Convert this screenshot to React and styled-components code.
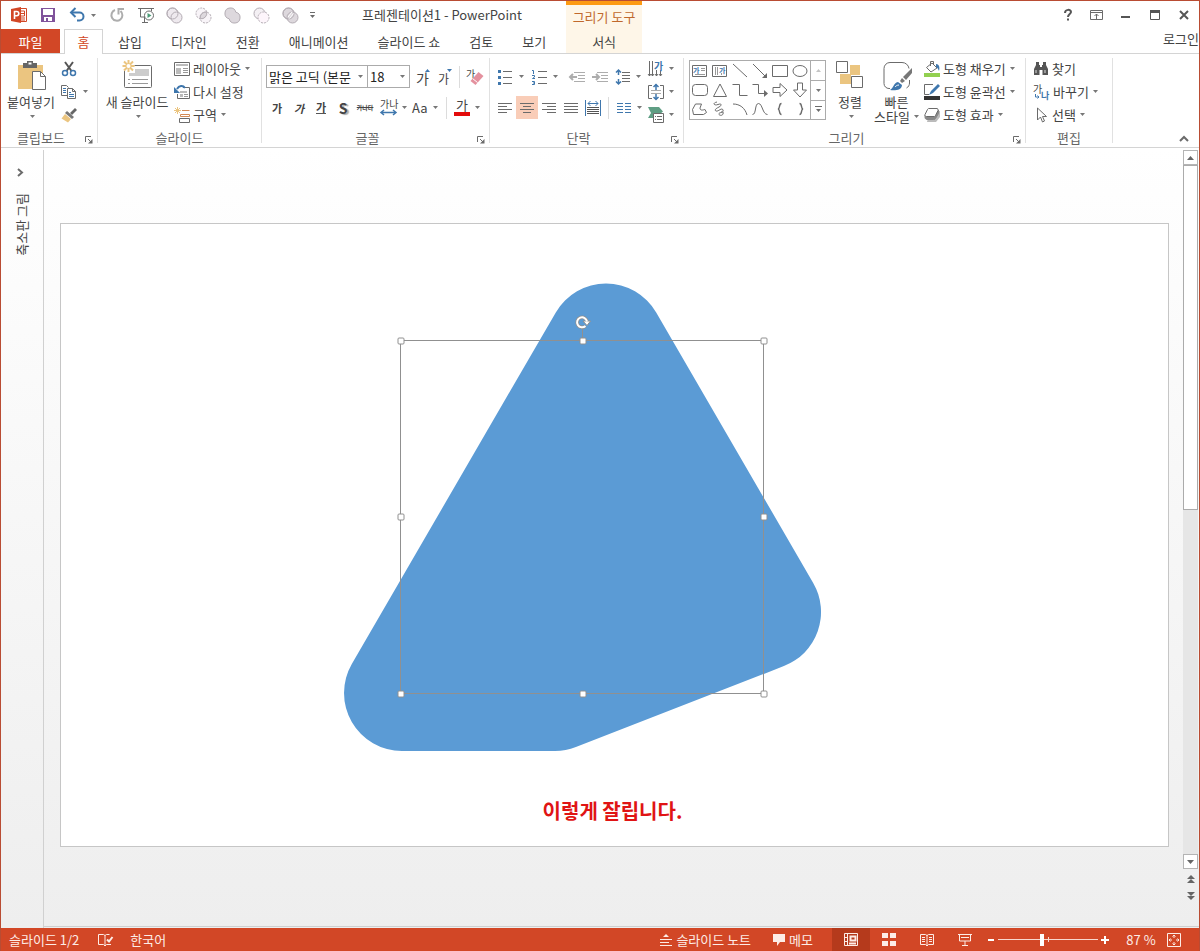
import React from "react";
import styled, { createGlobalStyle, css } from "styled-components";

const G = "#6b6b6b";
const B = "#3f77ad";
const Y = "#ebc580";

const GlobalStyle = createGlobalStyle`
  * { box-sizing: border-box; }
  body { margin: 0; }
  body, button, select, input {
    font-family: "Noto Sans CJK KR", "Liberation Sans", sans-serif;
    font-size: 13px;
    line-height: 18px;
    color: #444;
  }
  button {
    border: 0;
    padding: 0;
    margin: 0;
    background: transparent;
    white-space: nowrap;
  }
  svg { display: block; flex: none; overflow: visible; }
`;

const Window = styled.div`
  min-height: 100vh;
  display: flex;
  flex-direction: column;
  border: 1px solid #b94c33;
  border-bottom: 0;
  background: #fff;
  overflow: hidden;
`;

/* ---------- title bar ---------- */

const TitleBar = styled.header`
  display: flex;
  height: 28px;
`;

const QuickAccess = styled.div`
  display: flex;
  align-items: center;
  padding-left: 3px;
`;

const QuickButton = styled.button`
  width: 29px;
  height: 28px;
  display: flex;
  align-items: center;
  justify-content: center;
`;

const CaretButton = styled.button`
  width: ${(p) => p.$w || 11}px;
  height: 22px;
  display: flex;
  align-items: center;
  justify-content: flex-start;
`;

const DocTitle = styled.h1`
  margin: 0;
  width: 244px;
  padding: 4px 4px 0 0;
  font-size: 13px;
  line-height: 20px;
  font-weight: 400;
  text-align: center;
  white-space: nowrap;
`;

const ContextHeader = styled.div`
  width: 76px;
  border-top: 4px solid #fd9a12;
  background: #fef6e8;
  color: #c0682c;
  line-height: 24px;
  text-align: center;
  white-space: nowrap;
`;

const WindowControls = styled.div`
  display: flex;
  margin-left: auto;
  padding-right: 1px;
`;

/* ---------- tabs ---------- */

const TabBar = styled.nav`
  display: flex;
  height: 25px;
  box-shadow: inset 0 -1px #d4d4d4;
`;

const Tab = styled.button`
  height: 25px;
  padding: 0 14px;
  margin-right: 1px;
  line-height: 24px;
  ${(p) => p.$kind === "file" && css`
    width: 59px;
    height: 24px;
    padding-top: 2px;
    line-height: 22px;
    margin-right: 4px;
    background: #d24726;
    color: #fff;
  `}
  ${(p) => p.$kind === "active" && css`
    width: 39px;
    padding: 0;
    border: 1px solid #d4d4d4;
    border-bottom: 0;
    background: #fff;
    color: #d24726;
  `}
  ${(p) => p.$kind === "context" && css`
    width: 76px;
    height: 24px;
    padding-top: 2px;
    line-height: 22px;
    margin-left: 5px;
    background: #fef6e8;
  `}
`;

const SignIn = styled.a`
  margin-left: auto;
  color: #444;
  text-decoration: none;
  line-height: 20px;
  white-space: nowrap;
`;

/* ---------- ribbon ---------- */

const Ribbon = styled.section`
  display: flex;
  height: 94px;
  border-bottom: 1px solid #d4d4d4;
`;

const GroupBox = styled.div`
  display: flex;
  flex-direction: column;
  flex: none;
  min-width: ${(p) => p.$w}px;
  padding-top: 3px;
  background: linear-gradient(#e1e1e1, #e1e1e1) right 0 top 4px / 1px 85px no-repeat;
`;

const GroupBody = styled.div`
  display: flex;
  flex: 1;
  gap: 5px;
  padding-left: ${(p) => p.$pad}px;
`;

const GroupFooter = styled.div`
  display: flex;
  align-items: center;
  height: 18px;
  color: #666;
  padding-right: 1px;
  span { flex: 1; text-align: center; }
`;

const Launcher = styled.button`
  width: 16px;
  height: 16px;
  padding: 3px 0 0 4px;
`;

const BigButton = styled.button`
  width: ${(p) => p.$w}px;
  height: 70px;
  display: flex;
  flex-direction: column;
  align-items: center;
  padding-top: 3px;
  svg + span { margin-top: 2px; }
  span { line-height: 15px; }
  > svg:last-child { margin: 6px 0 0 3px; }
`;

const LabelWithCaret = styled.span`
  display: flex;
  align-items: center;
  gap: 4px;
`;

const Stack = styled.div`
  display: flex;
  flex-direction: column;
`;

const SmallButton = styled.button`
  height: 23px;
  display: flex;
  align-items: center;
  gap: ${(p) => p.$gap || 4}px;
  span { margin-left: -1px; }
`;

const Rows = styled.div`
  display: flex;
  flex-direction: column;
  gap: 8px;
  padding-top: 8px;
`;

const Row = styled.div`
  display: flex;
  align-items: center;
  height: 23px;
`;

const Combos = styled.div`
  display: flex;
  margin-right: 3px;
`;

const ToolButton = styled.button`
  width: ${(p) => p.$w || 22}px;
  height: 23px;
  display: flex;
  align-items: center;
  justify-content: center;
  background: ${(p) => (p.$on ? "#f9cdb8" : "transparent")};
`;

const SplitTool = styled.button`
  width: ${(p) => p.$w || 34}px;
  height: 23px;
  padding-left: 4px;
  display: flex;
  align-items: center;
  gap: 5px;
`;

const Separator = styled.i`
  width: 1px;
  height: 22px;
  margin: 0 ${(p) => p.$r}px 0 ${(p) => p.$l}px;
  background: #dcdcdc;
`;

const Glyph = styled.span`
  font-size: ${(p) => p.$size || 11}px;
  line-height: 12px;
  font-weight: ${(p) => (p.$regular ? 400 : 700)};
  font-style: ${(p) => (p.$italic ? "italic" : "normal")};
  border-bottom: ${(p) => (p.$under ? "1px solid #555" : "0")};
  text-shadow: ${(p) => (p.$shadow ? "2px 1px 1px #aaa" : "none")};
`;

const TinyStrike = styled.span`
  font-size: 6px;
  line-height: 12px;
  font-weight: 700;
  text-decoration: line-through;
`;

const Combo = styled.label`
  display: grid;
  align-items: center;
  width: ${(p) => p.$w}px;
  height: 23px;
  margin-right: -1px;
  border: 1px solid #ababab;
  > * { grid-area: 1 / 1; }
  svg { justify-self: end; margin-right: 4px; pointer-events: none; }
  select {
    appearance: none;
    width: 100%;
    height: 21px;
    border: 0;
    padding: 0 12px 0 2px;
    background: #fff;
    color: #222;
  }
`;

const Gallery = styled.div`
  display: grid;
  grid-template-columns: 120px 15px;
  height: 60px;
  margin-top: 3px;
  border: 1px solid #ababab;
`;

const GalleryGrid = styled.div`
  display: grid;
  grid-template-columns: repeat(6, 1fr);
  grid-template-rows: repeat(3, 1fr);
  button { display: flex; align-items: center; justify-content: center; }
`;

const GalleryScroll = styled.div`
  display: grid;
  grid-template-rows: repeat(3, 1fr);
  border-left: 1px solid #ababab;
  button { display: flex; align-items: center; justify-content: center; }
  button + button { border-top: 1px solid #ababab; }
`;

const Collapse = styled.button`
  align-self: flex-end;
  margin-left: auto;
  padding: 4px 10px;
`;

/* ---------- workspace ---------- */

const Workspace = styled.main`
  flex: 1;
  display: flex;
  background: linear-gradient(#fff, #eee);
  padding-top: 2px;
`;

const ThumbPane = styled.aside`
  width: 43px;
  flex: none;
  border-right: 1px solid #d0d0d0;
  display: flex;
  flex-direction: column;
  align-items: flex-start;
  padding: 17px 0 0 12px;
  gap: 15px;
`;

const VerticalLabel = styled.span`
  writing-mode: vertical-rl;
  text-orientation: sideways;
  transform: rotate(180deg);
  white-space: nowrap;
`;

const Canvas = styled.div`
  flex: 1;
  min-width: 0;
  padding: 73px 14px 24px 16px;
  border-bottom: 1px solid #cfcfcf;
  margin-bottom: 1px;
`;

const Slide = styled.div`
  display: grid;
  width: 100%;
  aspect-ratio: 16 / 9;
  border: 1px solid #c6c6c6;
  background: #fff;
  > * { grid-area: 1 / 1; }
`;

const Caption = styled.p`
  align-self: end;
  justify-self: center;
  margin: 0;
  padding: 0 4px 22px 0;
  color: #e01414;
  font-size: 20px;
  line-height: 26px;
  font-weight: 700;
`;

const ScrollRail = styled.div`
  width: 16px;
  flex: none;
  padding-right: 1px;
  display: flex;
  flex-direction: column;
  padding-bottom: 23px;
  margin-bottom: 1px;
  border-bottom: 1px solid #cfcfcf;
`;

const ScrollButton = styled.button`
  height: 15px;
  display: flex;
  align-items: center;
  justify-content: center;
  border: 1px solid #b4b4b4;
  background: #fff;
`;

const Track = styled.div`
  flex: 1;
  background: #e6e6e6;
`;

const Thumb = styled.div`
  height: 50%;
  border: 1px solid #ababab;
  background: #fff;
`;

const PageButton = styled.button`
  height: 17px;
  padding-bottom: 2px;
  display: flex;
  align-items: flex-end;
  justify-content: center;
`;

/* ---------- status bar ---------- */

const StatusBar = styled.footer`
  display: flex;
  align-items: center;
  height: 23px;
  margin: 0 -1px;
  padding: 0 19px 0 9px;
  background: #d24726;
  color: #fdece6;
  white-space: nowrap;
  button { color: inherit; height: 23px; display: flex; align-items: center; }
`;

const StatusButton = styled.button`
  gap: 4px;
  margin-left: ${(p) => p.$ml || 0}px;
`;

const Views = styled.div`
  display: flex;
  margin-left: 19px;
`;

const ViewButton = styled.button`
  width: 38px;
  justify-content: center;
  background: ${(p) => (p.$on ? "#b53a1c" : "transparent")};
`;

const Push = styled.div`
  flex: 1;
`;

const ZoomStep = styled.button`
  width: 14px;
  justify-content: center;
`;

const ZoomSlider = styled.input`
  appearance: none;
  width: 100px;
  height: 13px;
  margin: 0;
  background:
    linear-gradient(#f8d8ce, #f8d8ce) 0 6px / 100px 1px no-repeat,
    linear-gradient(#f8d8ce, #f8d8ce) 50px 4px / 1px 5px no-repeat;
  &::-webkit-slider-thumb {
    appearance: none;
    width: 4px;
    height: 12px;
    background: #fff;
  }
`;

const ZoomValue = styled.button`
  width: 42px;
  margin: 0 5px 0 8px;
  justify-content: center;
`;

/* ---------- icons ---------- */

const Svg = ({ w = 16, h = 16, s = G, sw = 1, children }) => (
  <svg width={w} height={h} viewBox={`0 0 ${w} ${h}`} fill="none" stroke={s} strokeWidth={sw} aria-hidden="true">
    {children}
  </svg>
);

const KR = { fontFamily: "Noto Sans CJK KR, sans-serif", stroke: "none" };

const Caret = ({ c = "#777" }) => (
  <svg width="5" height="3" viewBox="0 0 5 3" aria-hidden="true"><path d="M0 0h5L2.500 3z" fill={c} /></svg>
);

const AppLogo = () => (
  <Svg w={18} h={18} s="none">
    <path d="M9 2.500h7.500v13H9z" fill="#fff" stroke="#d24726" />
    <path d="M11 12h4M11 14h4" stroke="#d24726" />
    <path d="M11 5h3.500v5H11M11 7.500h3" stroke="#d24726" />
    <path d="M1 3l10-2v16L1 15z" fill="#d24726" />
    <path d="M4.500 13V5.500h2.200a2 2 0 0 1 0 4.200H4.500" stroke="#fff" strokeWidth="1.600" />
  </Svg>
);

const SaveIcon = () => (
  <Svg s="none">
    <path d="M1 1h14v14H1z" fill="#80539b" />
    <path d="M3 2h10v6H3z" fill="#fff" />
    <path d="M4 10h8v4H4z" fill="#fff" />
    <path d="M6 11h2v3H6z" fill="#80539b" />
  </Svg>
);

const UndoIcon = () => (
  <Svg s={B} sw={2}>
    <path d="M2 5.500h8.500a4 4 0 0 1 0 8H8" />
    <path d="M6.500 1L2 5.500 6.500 10" />
  </Svg>
);

const RedoIcon = () => (
  <Svg s="#adadad" sw={2}>
    <path d="M6 3A5.500 5.500 0 1 0 11.500 4" />
    <path d="M9.500 7.500V2H15" />
  </Svg>
);

const ShowIcon = () => (
  <Svg w={18}>
    <path d="M1 1.500h16M3.500 2v8H8M7.500 10v5M5 15.500h6M14.500 2v2" />
    <circle cx="12" cy="8.500" r="4.500" fill="#fff" />
    <path d="M10.500 6v5l4-2.500z" fill="#4b9b76" stroke="none" />
  </Svg>
);

const MERGES = [
  ["도형 병합", <g><circle cx="6.500" cy="6.500" r="5.500" fill="#eee9ee" /><circle cx="10.500" cy="10.500" r="5.500" fill="#eee9ee" /><circle cx="6.500" cy="6.500" r="5.500" /></g>],
  ["도형 교차", <g><g strokeDasharray="2 1"><circle cx="6.500" cy="6.500" r="5.500" fill="#f8f4f8" /><circle cx="10.500" cy="10.500" r="5.500" fill="#f8f4f8" /></g><path d="M11.700 5.200A5.500 5.500 0 0 0 5.300 11.700 5.500 5.500 0 0 0 11.700 5.200z" fill="#ddd8dd" /></g>],
  ["도형 통합", <path d="M5.200 11.800a5.500 5.500 0 1 1 6.600-6.600 5.500 5.500 0 1 1-6.600 6.600z" fill="#ddd8dd" />],
  ["도형 빼기", <g><circle cx="6.500" cy="6.500" r="5.500" fill="#f4f0f4" /><circle cx="10.500" cy="10.500" r="5.500" fill="#fdf5fb" strokeDasharray="2 1" /></g>],
  ["도형 조각", <g><circle cx="6.500" cy="6.500" r="5.500" fill="#ddd8dd" /><circle cx="10.500" cy="10.500" r="5.500" fill="#ddd8dd" /><circle cx="6.500" cy="6.500" r="5.500" /><path d="M6 10l4-5M7.500 11.500l4-5" stroke="#fff" /></g>],
];

const PasteIcon = () => (
  <Svg w={30} h={32}>
    <path d="M2 5h25v24H2z" fill={Y} stroke="none" />
    <path d="M7 3h4V1h6v2h4v5H7z" fill="#666" stroke="none" />
    <path d="M12.500 2.500h3v2h-3z" fill="#fff" stroke="none" />
    <path d="M16.500 11.500h8l5 5v13h-13z" fill="#fff" />
    <path d="M24.500 11.500v5h5" />
  </Svg>
);

const CutIcon = () => (
  <Svg>
    <path d="M4 1l6.500 9M12 1L5.500 10" stroke="#555" strokeWidth="2" />
    <circle cx="4" cy="12" r="2.500" stroke={B} strokeWidth="1.500" />
    <circle cx="12" cy="12" r="2.500" stroke={B} strokeWidth="1.500" />
  </Svg>
);

const CopyIcon = () => (
  <Svg>
    <path d="M6.500 11.500h-6v-10h5l2 2" />
    <path d="M2 4.500h3M2 6.500h3M2 8.500h3" stroke={B} />
    <path d="M6.500 4.500h5l3 3v7h-8z" fill="#fff" />
    <path d="M11.500 4.500v3h3" />
    <path d="M8 8.500h2M8 10.500h5M8 12.500h5" stroke={B} />
  </Svg>
);

const BrushIcon = () => (
  <Svg s="none">
    <path d="M14 1l2 2-5 5-2-2z" fill="#666" />
    <path d="M6 4l7 6-2 2-7-6z" fill="#777" />
    <path d="M4 7l6 5-3 3.500-6.500-4z" fill={Y} />
  </Svg>
);

const NewSlideIcon = () => (
  <Svg w={32} h={32}>
    <rect x="3.500" y="5.500" width="27" height="22" rx="1" fill="#fff" />
    <path d="M14 9h14v7H8v-3h6z" fill="#ccc" stroke="none" />
    <path d="M7 19.500h2M11 19.500h16M7 23.500h2M11 23.500h16" stroke="#999" />
    <circle cx="7.500" cy="6" r="6" fill="#fff" stroke="none" />
    <path d="M7.500 0v12M1.500 6h12M3 1.500l9 9M12 1.500l-9 9" stroke={Y} strokeWidth="2" />
    <circle cx="7.500" cy="6" r="2" fill="#fff" stroke="none" />
  </Svg>
);

const LayoutIcon = () => (
  <Svg>
    <path d="M.5 1.500h15v13H.5z" />
    <path d="M2 3h12v2H2zM2 7h5v6H2z" fill="#bbb" stroke="none" />
    <path d="M9 7.500h5M9 9.500h5M9 11.500h5" stroke="#999" />
  </Svg>
);

const ResetIcon = () => (
  <Svg>
    <path d="M9 3.500h6.500v11h-12V10" />
    <path d="M6 7h7v2H6zM6 10h3v3H6z" fill="#bbb" stroke="none" />
    <path d="M10 10.500h4M10 12.500h4" stroke="#999" />
    <path d="M11 4C9 1 5 1.500 3 5" stroke={B} strokeWidth="2" />
    <path d="M0 3v6h6z" fill={B} stroke="none" />
  </Svg>
);

const SectionIcon = () => (
  <Svg>
    <path d="M3.500 0v7M0 3.500h7M1 1l5 5M6 1L1 6" stroke={Y} />
    <path d="M8 3.500h7.500M6.500 7.500h9v2h-9z" stroke="#d38a55" />
    <path d="M5.500 11.500h10v4h-10z" />
  </Svg>
);

const GrowIcon = ({ down }) => (
  <Svg h={18}>
    <text x="0" y="16" fontSize={down ? 12 : 14} fill="#444" {...KR}>가</text>
    <path d={down ? "M9 1h5l-2.500 3z" : "M9 4h5L11.500 1z"} fill={B} stroke="none" />
  </Svg>
);

const ClearIcon = () => (
  <Svg w={18} h={18}>
    <text x="0" y="10" fontSize="10" fill="#444" {...KR}>가</text>
    <path d="M12.500 4l5 4-8 9-5-4z" fill="#e4919e" stroke="none" />
    <path d="M6.500 10.500l5 4" stroke="#fff" />
  </Svg>
);

const SpacingIcon = () => (
  <Svg w={17} h={18}>
    <text x="0" y="9" fontSize="10" fill="#444" {...KR}>가나</text>
    <path d="M1.500 13.500h14M4 11l-3 2.500L4 16M13 11l3 2.500L13 16" stroke={B} strokeWidth="1.500" />
  </Svg>
);

const ColorIcon = () => (
  <Svg h={18}>
    <text x="2" y="11" fontSize="13" fill="#444" {...KR}>가</text>
    <path d="M0 13h16v4H0z" fill="#e30b0b" stroke="none" />
  </Svg>
);

const BulletsIcon = () => (
  <Svg>
    <path d="M5 2.500h9M5 8.500h9M5 14.500h9" />
    <path d="M0 1h3v3H0zM0 7h3v3H0zM0 13h3v3H0z" fill={B} stroke="none" />
  </Svg>
);

const NumberIcon = () => (
  <Svg>
    <path d="M6 2.500h9M6 8.500h9M6 14.500h9" />
    <path d="M0 1.500h1.500V5M0 6.500h2.500v1.500L.5 9.500H3M0 12.500h2.500v3H0M1 14h1.500" stroke={B} />
  </Svg>
);

const IndentIcon = ({ right }) => (
  <Svg s="#adadad">
    <path d="M5 3.500h11M9 6.500h7M9 9.500h7M5 12.500h11" />
    <path d={right ? "M0 8h7M4 5l3 3-3 3" : "M1 8h7M4 5L1 8l3 3"} strokeWidth="2" />
  </Svg>
);

const LineHeightIcon = () => (
  <Svg>
    <path d="M7 3.500h8M7 6.500h8M7 9.500h8M7 12.500h8" />
    <path d="M3.500 1v5M3.500 10v5M1 3.500L3.500 1 6 3.500M1 12.500L3.500 15 6 12.500" stroke={B} strokeWidth="1.500" />
  </Svg>
);

const AlignIcon = ({ kind }) => {
  const d = {
    left: "M1 2.500h14M1 5.500h9M1 8.500h14M1 11.500h9",
    center: "M1 2.500h14M4 5.500h8M1 8.500h14M4 11.500h8",
    right: "M1 2.500h14M6 5.500h9M1 8.500h14M6 11.500h9",
    justify: "M1 2.500h14M1 5.500h14M1 8.500h14M1 11.500h14",
  }[kind];
  return <Svg h={14}><path d={d} /></Svg>;
};

const DistributeIcon = () => (
  <Svg>
    <path d="M2 7.500h12M2 9.500h12M2 11.500h12M2 13.500h12" stroke="#555" />
    <path d="M.5 0v16M15.500 0v16M3 3.500h10M5.500 1L3 3.500 5.500 6M10.500 1L13 3.500 10.500 6" stroke={B} />
  </Svg>
);

const ColumnsIcon = () => (
  <Svg h={14}><path d="M1 2.500h6M1 5.500h6M1 8.500h6M1 11.500h6M9 2.500h6M9 5.500h6M9 8.500h6M9 11.500h6" stroke={B} /></Svg>
);

const TextDirIcon = () => (
  <Svg w={17}>
    <path d="M1.500 0v15M4.500 0v15M8.500 9v6M12.500 9v6M0 13l1.500 2L3 13M3 13l1.500 2L6 13M7 13l1.500 2 1.500-2M11 13l1.500 2 1.500-2" />
    <text x="6" y="9" fontSize="10" fontWeight="700" fill={B} {...KR}>가</text>
  </Svg>
);

const TextAlignIcon = () => (
  <Svg w={17}>
    <path d="M4 1.500H.5v13H4M12 1.500h3.500v13H12" />
    <path d="M3 6.500h10M3 9.500h10" stroke="#aaa" />
    <path d="M8 0v6M8 10v6M5.500 3L8 .5 10.500 3M5.500 13L8 15.500 10.500 13" stroke={B} strokeWidth="1.500" />
  </Svg>
);

const SmartArtIcon = () => (
  <Svg w={17}>
    <path d="M0 0h11l4 4.500L12 7H5v4H0l3-5z" fill="#5f9e84" stroke="none" />
    <path d="M5.500 6.500h10v9h-10z" fill="#fff" />
    <path d="M7 9.500h1M9 9.500h5M7 12.500h1M9 12.500h5" />
  </Svg>
);

const SHAPES = [
  ["텍스트 상자", <><path d="M.5 2.500h14v11H.5z" /><text x="1" y="10" fontSize="7" fontWeight="700" fill={B} {...KR}>가</text><path d="M9 5.500h4M9 7.500h4M3 11.500h10" stroke="#999" /></>],
  ["세로 텍스트 상자", <><path d="M.5 2.500h14v11H.5z" /><text x="7" y="10" fontSize="7" fontWeight="700" fill={B} {...KR}>가</text><path d="M3.500 4v8M5.500 4v8M9.500 10v2" stroke="#999" /></>],
  ["선", <path d="M1 1l14 13" />],
  ["화살표", <><path d="M1 1l13 13" /><path d="M15 10v5h-5z" fill={G} stroke="none" /></>],
  ["직사각형", <path d="M.5 2.500h15v11H.5z" />],
  ["타원", <ellipse cx="8" cy="8" rx="7" ry="5.500" />],
  ["둥근 직사각형", <rect x=".5" y="2.500" width="15" height="11" rx="3" />],
  ["삼각형", <path d="M8 2l6.500 12.500h-13z" />],
  ["꺾인 연결선", <path d="M.5 2.500h7v11h8" />],
  ["꺾인 화살표", <><path d="M.5 2.500h6v9h8" /><path d="M12 8l4 3.500-4 3.500z" fill={G} stroke="none" /></>],
  ["오른쪽 화살표", <path d="M1 5.500h7v-4l7 6.500-7 6.500v-4H1z" />],
  ["아래쪽 화살표", <path d="M5.500 1h5v7h4L8 15 1.500 8h4z" />],
  ["자유형", <path d="M1.500 13.500l-1-5 3-5.500h6L8 7c0 3 3 2 5 1.500l1.500 3-3 2z" />],
  ["자유 곡선", <path d="M5 1C0 2 2 5 6 3.500s4 1 1 2.500-5 3-3 4 6-4 7-1-3 2-4 3.500 3 3 4 .5-1-2-2-2" />],
  ["호", <path d="M1 3c7 0 12 4 14 11" />],
  ["곡선", <path d="M.5 13.500c4 0 2-11 6-11s4 11 9 11" />],
  ["왼쪽 중괄호", <path d="M9.500 2.500c-3 0-1 5-3.500 5.500 2.500.5.5 5.500 3.500 5.500" strokeWidth="1.500" />],
  ["오른쪽 중괄호", <path d="M7.500 2.500c3 0 1 5 3.500 5.500-2.500.5-.5 5.500-3.500 5.500" strokeWidth="1.500" />],
];

const ArrangeIcon = () => (
  <Svg w={28} h={32}>
    <path d="M14 5h10v10H14zM4 14h11v10H4z" fill={Y} stroke="none" />
    <path d="M.5 1.500h11v11H.5z" fill="#fff" />
    <path d="M15.500 16.500h11v11h-11z" fill="#fff" />
  </Svg>
);

const QuickStyleIcon = () => (
  <Svg w={30} h={32}>
    <path d="M8 28.500H7a5 5 0 0 1-5-5v-15a6 6 0 0 1 6-6h12a7 7 0 0 1 7 6M27.500 20v3c0 2-1 4-3 5" />
    <path d="M30 8v5l-6 7-3-3z" fill="#777" stroke="none" />
    <path d="M20 18l3 3-3 2-2-2z" fill="#777" stroke="none" />
    <path d="M8 30c4-2 3-7 8-8l4 3c0 5-7 6-12 5z" fill={B} stroke="none" />
    <path d="M13 27c1-1 2-2 4-2" stroke="#fff" />
  </Svg>
);

const FillIcon = () => (
  <Svg>
    <path d="M0 12h16v4H0z" fill="#92d050" stroke="none" />
    <path d="M2.500 6.500L8 2l5 5-6 4zM6.500 5V.5h3V4" fill="#fff" />
    <path d="M12 3c3 0 4 3 3 7-1-2-1-3-3-4z" fill={B} stroke="none" />
  </Svg>
);

const OutlineIcon = () => (
  <Svg>
    <path d="M0 12h16v4H0z" fill="#333" stroke="none" />
    <path d="M9 .5H.5v10H5" />
    <path d="M14 0l2 2-7 7-4 2 2-4z" fill={B} stroke="none" />
  </Svg>
);

const EffectIcon = () => (
  <Svg>
    <path d="M6 4h10v6l-4 5H3z" fill="#bbb" stroke="none" />
    <path d="M1 8v2.500c0 1 1 2 2 2h6.500c1 0 1.500 0 2-1l3-5V3" fill="#888" stroke="#888" />
    <path d="M5 1.500h8a1.500 1.500 0 0 1 1 2l-2.500 5c-.5 1-1 1-1.500 1H2.500a1.500 1.500 0 0 1-1.500-2l2.500-5c.5-1 1-1 1.500-1z" fill="#fff" />
  </Svg>
);

const FindIcon = () => (
  <Svg s="none">
    <path d="M3 1h3v3h1v2h2V4h1V1h3v3l2 4v6H9.500V9h-3v5H1V8l2-4z" fill="#555" />
    <path d="M3 9v3M12 9v3" stroke="#ddd" />
  </Svg>
);

const ReplaceIcon = () => (
  <Svg w={17} h={18}>
    <text x="0" y="10" fontSize="10" fill="#444" {...KR}>가</text>
    <text x="8" y="16" fontSize="9" fontWeight="700" fill={B} {...KR}>나</text>
    <path d="M2.500 11v3H6M4.500 12.500L6 14l-1.500 1.500" stroke={B} />
  </Svg>
);

const SelectIcon = () => (
  <Svg><path d="M4.500 1v12l3-3 2 5 2-1-2-4.500h4z" /></Svg>
);

const AccessIcon = () => (
  <Svg h={14} s="#fdece6">
    <path d="M7 2.500L5.500 1.500h-5v10h5L7 13l1.500-1.500H13M7 2.500V13M7 2.500l1.500-1h3" />
    <path d="M9 6.500l2 2L14.500 4" strokeWidth="2" />
  </Svg>
);

/* ---------- parts ---------- */

const Group = ({ label, w, pad, launcher, children }) => (
  <GroupBox $w={w}>
    <GroupBody $pad={pad}>{children}</GroupBody>
    <GroupFooter>
      <span>{label}</span>
      {launcher && (
        <Launcher aria-label={`${label} 옵션`}>
          <Svg w={8} h={8}><path d="M.5 6V.5H6M3 3l3 3" /><path d="M7.500 3v4.500H3z" fill={G} stroke="none" /></Svg>
        </Launcher>
      )}
    </GroupFooter>
  </GroupBox>
);

const Small = ({ icon, label, caret = true, gap }) => (
  <SmallButton $gap={gap}>{icon}<span>{label}</span>{caret && <Caret />}</SmallButton>
);

function SelectedShape() {
  const handles = [[340, 117], [522, 117], [703, 117], [340, 293], [703, 293], [340, 470], [522, 470], [703, 470]];
  return (
    <svg width="100%" viewBox="0 0 1107 622" role="img" aria-label="모서리가 둥근 삼각형">
      <path
        d="M290.800 440L494.800 88.400A58 58 0 0 1 595.200 88.400L752.200 358.900A58 58 0 0 1 722.900 442.100L514.900 523.100A58 58 0 0 1 494 527H341A58 58 0 0 1 290.800 440z"
        fill="#5b9bd5"
      />
      <path d="M339.500 116.500h363v353h-363zM521.500 104v10" fill="none" stroke="#909090" />
      {handles.map(([x, y]) => (
        <rect key={`${x}-${y}`} x={x - 3} y={y - 3} width="6" height="6" rx="1" fill="#fff" stroke="#909090" />
      ))}
      <g fill="none">
        <path d="M524.500 102a5 5 0 1 1 1.500-4.500" stroke="#909090" strokeWidth="3.500" />
        <path d="M522 97h7.500l-3.500 4.500z" fill="#fff" stroke="#909090" />
        <path d="M524.500 102a5 5 0 1 1 1.500-4.500" stroke="#fff" strokeWidth="2" />
      </g>
    </svg>
  );
}

export default function App() {
  return (
    <>
      <GlobalStyle />
      <Window>
        <TitleBar>
          <QuickAccess>
            <QuickButton aria-label="PowerPoint"><AppLogo /></QuickButton>
            <QuickButton aria-label="저장"><SaveIcon /></QuickButton>
            <QuickButton aria-label="실행 취소"><UndoIcon /></QuickButton>
            <CaretButton aria-label="실행 취소 목록"><Caret /></CaretButton>
            <QuickButton aria-label="다시 실행"><RedoIcon /></QuickButton>
            <QuickButton aria-label="처음부터 시작"><ShowIcon /></QuickButton>
            {MERGES.map(([name, art]) => (
              <QuickButton key={name} aria-label={name}><Svg w={17} h={17} s="#b4adb4">{art}</Svg></QuickButton>
            ))}
            <CaretButton $w={17} aria-label="빠른 실행 도구 모음 사용자 지정">
              <Svg w={14} h={7}><path d="M5 .5h5" /><path d="M5 3h5L7.500 6z" fill={G} stroke="none" /></Svg>
            </CaretButton>
          </QuickAccess>
          <DocTitle>프레젠테이션1 - PowerPoint</DocTitle>
          <ContextHeader>그리기 도구</ContextHeader>
          <WindowControls>
            <QuickButton aria-label="도움말"><Svg w={12} h={14} sw={2} s="#555"><path d="M3 5c0-4 6-4 6-1 0 2-3 2-3 5M6 10.500v2" /></Svg></QuickButton>
            <QuickButton aria-label="리본 표시 옵션"><Svg w={13} h={12}><path d="M.5 1.500h12v9H.5zM1 3.500h11M6.500 10V5M4.500 7l2-2 2 2" /></Svg></QuickButton>
            <QuickButton aria-label="최소화"><Svg w={10} h={10} s="#555" sw={2}><path d="M0 7h9" /></Svg></QuickButton>
            <QuickButton aria-label="최대화"><Svg w={10} h={10} s="#555"><path d="M.5.5h9v9h-9z" /><path d="M0 1.500h10" strokeWidth="3" /></Svg></QuickButton>
            <QuickButton aria-label="닫기"><Svg w={10} h={10} s="#555" sw={2}><path d="M1 1l8 8M9 1L1 9" /></Svg></QuickButton>
          </WindowControls>
        </TitleBar>

        <TabBar>
          <Tab $kind="file">파일</Tab>
          <Tab $kind="active">홈</Tab>
          {["삽입", "디자인", "전환", "애니메이션", "슬라이드 쇼", "검토", "보기"].map((t) => <Tab key={t}>{t}</Tab>)}
          <Tab $kind="context">서식</Tab>
          <SignIn href="#login">로그인</SignIn>
        </TabBar>

        <Ribbon>
          <Group label="클립보드" w={97} pad={5} launcher>
            <BigButton $w={50}><PasteIcon /><span>붙여넣기</span><Caret /></BigButton>
            <Stack>
              <SmallButton aria-label="잘라내기"><CutIcon /></SmallButton>
              <SmallButton $gap={6} aria-label="복사"><CopyIcon /><Caret /></SmallButton>
              <SmallButton aria-label="서식 복사"><BrushIcon /></SmallButton>
            </Stack>
          </Group>

          <Group label="슬라이드" w={164} pad={7}>
            <BigButton $w={64}><NewSlideIcon /><span>새 슬라이드</span><Caret /></BigButton>
            <Stack>
              <Small icon={<LayoutIcon />} label="레이아웃" />
              <Small icon={<ResetIcon />} label="다시 설정" caret={false} />
              <Small icon={<SectionIcon />} label="구역" />
            </Stack>
          </Group>

          <Group label="글꼴" w={228} pad={4} launcher>
            <Rows>
              <Row>
                <Combos>
                  <Combo $w={102}>
                    <select aria-label="글꼴"><option>맑은 고딕 (본문</option></select>
                    <Caret />
                  </Combo>
                  <Combo $w={43}>
                    <select aria-label="글꼴 크기"><option>18</option></select>
                    <Caret />
                  </Combo>
                </Combos>
                <ToolButton $w={23} aria-label="글꼴 크기 크게"><GrowIcon /></ToolButton>
                <ToolButton aria-label="글꼴 크기 작게"><GrowIcon down /></ToolButton>
                <Separator $l={2} $r={4} />
                <ToolButton aria-label="서식 지우기"><ClearIcon /></ToolButton>
              </Row>
              <Row>
                <ToolButton aria-label="굵게"><Glyph>가</Glyph></ToolButton>
                <ToolButton aria-label="기울임꼴"><Glyph $italic>가</Glyph></ToolButton>
                <ToolButton aria-label="밑줄"><Glyph $under>가</Glyph></ToolButton>
                <ToolButton aria-label="그림자"><Glyph $shadow $size={14}>S</Glyph></ToolButton>
                <ToolButton aria-label="취소선"><TinyStrike>가나다</TinyStrike></ToolButton>
                <SplitTool $w={32} aria-label="문자 간격"><SpacingIcon /><Caret /></SplitTool>
                <SplitTool $w={34} aria-label="대/소문자 바꾸기"><Glyph $regular $size={13}>Aa</Glyph><Caret /></SplitTool>
                <Separator $l={4} $r={3} />
                <SplitTool $w={32} aria-label="글꼴 색"><ColorIcon /><Caret /></SplitTool>
              </Row>
            </Rows>
          </Group>

          <Group label="단락" w={194} pad={4} launcher>
            <Rows>
              <Row>
                <SplitTool aria-label="글머리 기호"><BulletsIcon /><Caret /></SplitTool>
                <SplitTool $w={37} aria-label="번호 매기기"><NumberIcon /><Caret /></SplitTool>
                <ToolButton $w={23} aria-label="목록 수준 줄임"><IndentIcon /></ToolButton>
                <ToolButton $w={23} aria-label="목록 수준 늘림"><IndentIcon right /></ToolButton>
                <SplitTool $w={32} aria-label="줄 간격"><LineHeightIcon /><Caret /></SplitTool>
              </Row>
              <Row>
                <ToolButton aria-label="왼쪽 맞춤"><AlignIcon kind="left" /></ToolButton>
                <ToolButton $on aria-label="가운데 맞춤"><AlignIcon kind="center" /></ToolButton>
                <ToolButton aria-label="오른쪽 맞춤"><AlignIcon kind="right" /></ToolButton>
                <ToolButton aria-label="양쪽 맞춤"><AlignIcon kind="justify" /></ToolButton>
                <ToolButton aria-label="균등 분할"><DistributeIcon /></ToolButton>
                <Separator $l={4} $r={3} />
                <SplitTool $w={31} aria-label="열 추가"><ColumnsIcon /><Caret /></SplitTool>
              </Row>
            </Rows>
            <Stack>
              <SmallButton aria-label="텍스트 방향"><TextDirIcon /><Caret /></SmallButton>
              <SmallButton aria-label="텍스트 맞춤"><TextAlignIcon /><Caret /></SmallButton>
              <SmallButton aria-label="SmartArt로 변환"><SmartArtIcon /><Caret /></SmallButton>
            </Stack>
          </Group>

          <Group label="그리기" w={342} pad={5} launcher>
            <Gallery>
              <GalleryGrid>
                {SHAPES.map(([name, art]) => <button key={name} aria-label={name}><Svg>{art}</Svg></button>)}
              </GalleryGrid>
              <GalleryScroll>
                <button aria-label="위로"><Svg w={5} h={3}><path d="M0 3h5L2.500 0z" fill="#c4c4c4" stroke="none" /></Svg></button>
                <button aria-label="아래로"><Caret /></button>
                <button aria-label="자세히"><Svg w={7} h={7}><path d="M0 .5h7" /><path d="M1 3h5L3.500 6z" fill={G} stroke="none" /></Svg></button>
              </GalleryScroll>
            </Gallery>
            <BigButton $w={38}><ArrangeIcon /><span>정렬</span><Caret /></BigButton>
            <BigButton $w={45}>
              <QuickStyleIcon />
              <span>빠른</span>
              <LabelWithCaret>스타일<Caret /></LabelWithCaret>
            </BigButton>
            <Stack>
              <Small icon={<FillIcon />} label="도형 채우기" />
              <Small icon={<OutlineIcon />} label="도형 윤곽선" />
              <Small icon={<EffectIcon />} label="도형 효과" />
            </Stack>
          </Group>

          <Group label="편집" w={87} pad={7}>
            <Stack>
              <Small icon={<FindIcon />} label="찾기" caret={false} />
              <Small icon={<ReplaceIcon />} label="바꾸기" />
              <Small icon={<SelectIcon />} label="선택" />
            </Stack>
          </Group>

          <Collapse aria-label="리본 메뉴 축소"><Svg w={10} h={8} sw={2}><path d="M1 6l4-4 4 4" /></Svg></Collapse>
        </Ribbon>

        <Workspace>
          <ThumbPane>
            <button aria-label="축소판 그림 펼치기"><Svg w={14} h={11} sw={2}><path d="M5 2l4 3.500L5 9" /></Svg></button>
            <VerticalLabel>축소판 그림</VerticalLabel>
          </ThumbPane>
          <Canvas>
            <Slide>
              <SelectedShape />
              <Caption>이렇게 잘립니다.</Caption>
            </Slide>
          </Canvas>
          <ScrollRail>
            <ScrollButton aria-label="위로 스크롤"><Svg w={7} h={4}><path d="M0 4h7L3.500 0z" fill="#666" stroke="none" /></Svg></ScrollButton>
            <Track><Thumb /></Track>
            <ScrollButton aria-label="아래로 스크롤"><Svg w={7} h={4}><path d="M0 0h7L3.500 4z" fill="#666" stroke="none" /></Svg></ScrollButton>
            <PageButton aria-label="이전 슬라이드"><Svg w={8} h={9}><path d="M0 4h8L4 0zM0 8h8L4 4z" fill="#666" stroke="none" /></Svg></PageButton>
            <PageButton aria-label="다음 슬라이드"><Svg w={8} h={9}><path d="M0 0h8L4 4zM0 4h8L4 8z" fill="#666" stroke="none" /></Svg></PageButton>
          </ScrollRail>
        </Workspace>

        <StatusBar>
          <StatusButton>슬라이드 1/2</StatusButton>
          <StatusButton $ml={19} aria-label="맞춤법 검사"><AccessIcon /></StatusButton>
          <StatusButton $ml={16}>한국어</StatusButton>
          <Push />
          <StatusButton>
            <Svg w={12} h={14} s="#fdece6"><path d="M0 6.500h12M0 9.500h9M0 12.500h12" /><path d="M3 4h6L6 1z" fill="#fdece6" stroke="none" /></Svg>
            슬라이드 노트
          </StatusButton>
          <StatusButton $ml={21}>
            <Svg w={13} h={13} s="none"><path d="M1 1h12v8H8l-3 4V9H1z" fill="#fdece6" /></Svg>
            메모
          </StatusButton>
          <Views>
            <ViewButton $on aria-label="기본"><Svg w={14} h={13} s="#fdece6"><path d="M.5.5h13v12H.5zM3.500 1v11" /><path d="M1 4.500h2M1 8.500h2" /><path d="M6.500 3.500h5v4h-5zM5 10.500h7" strokeWidth="2" /></Svg></ViewButton>
            <ViewButton aria-label="여러 슬라이드"><Svg w={14} h={13} s="none"><path d="M0 0h6v5H0zM8 0h6v5H8zM0 8h6v5H0zM8 8h6v5H8z" fill="#fdece6" /></Svg></ViewButton>
            <ViewButton aria-label="읽기용 보기"><Svg w={14} h={14} s="#fdece6"><path d="M7 2.500L5.500 1.500h-5v10h5L7 13l1.500-1.500h5v-10h-5zM7 2v11M2 4.500h3M2 6.500h3M2 8.500h3M9 4.500h3M9 6.500h3M9 8.500h3" /></Svg></ViewButton>
            <ViewButton aria-label="슬라이드 쇼"><Svg w={14} h={14} s="#fdece6"><path d="M0 1.500h14M1.500 2v6h11V2M7 8v4M4 12.500h6M3 4.500h8" /></Svg></ViewButton>
          </Views>
          <ZoomStep aria-label="축소"><Svg w={6} h={6} s="#fff" sw={2}><path d="M0 3h6" /></Svg></ZoomStep>
          <ZoomSlider type="range" min="0" max="100" defaultValue="44" aria-label="확대/축소" />
          <ZoomStep aria-label="확대"><Svg w={8} h={8} s="#fff" sw={2}><path d="M0 4h8M4 0v8" /></Svg></ZoomStep>
          <ZoomValue>87 %</ZoomValue>
          <StatusButton aria-label="창에 맞춤"><Svg w={14} h={14} s="#fdece6"><path d="M.5.5h13v13H.5z" /><path d="M7 2v3M7 9v3M2 7h3M9 7h3M5.500 3.500L7 2l1.500 1.500M5.500 10.500L7 12l1.500-1.500M3.500 5.500L2 7l1.500 1.500M10.500 5.500L12 7l-1.500 1.500" /></Svg></StatusButton>
        </StatusBar>
      </Window>
    </>
  );
}
